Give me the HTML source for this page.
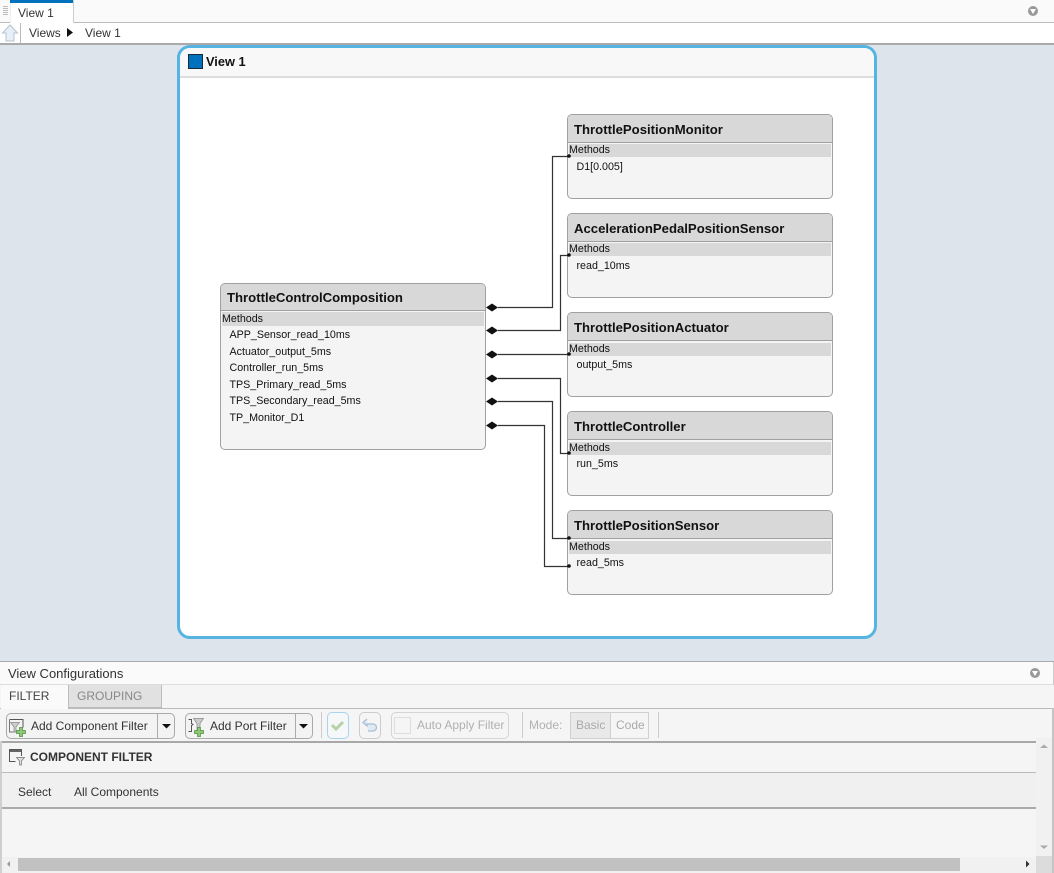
<!DOCTYPE html>
<html><head><meta charset="utf-8"><style>
html,body{margin:0;padding:0;width:1054px;height:873px;overflow:hidden;background:#dde4ec;font-family:"Liberation Sans",Arial,sans-serif;color:#222}
.a{position:absolute;box-sizing:border-box}
.t{position:absolute;white-space:nowrap;font-size:12px;line-height:14px}
.blk{position:absolute;box-sizing:border-box;width:266px;background:#f4f4f4;border:1px solid #a0a0a0;border-radius:5px;overflow:hidden}
.blk .h{position:absolute;left:0;top:0;right:0;height:27px;background:#d8d8d8;border-bottom:1px solid #a0a0a0;font-weight:bold;font-size:13.15px;line-height:29px;padding-left:6px;color:#111;box-sizing:content-box}
.blk .m{position:absolute;left:1px;top:29px;right:1px;height:13px;background:#d8d8d8;font-size:10.7px;line-height:13px;color:#111}
.blk .m2{top:30px}
.blk .r{position:absolute;left:8.500px;font-size:10.7px;line-height:14px;color:#111;white-space:nowrap}
svg{position:absolute;left:0;top:0}
</style></head><body>
<div class="a" style="left:0;top:0;width:1054px;height:23px;background:#fafafa;border-bottom:1px solid #bcbcbc"></div>
<div class="a" style="left:10px;top:0;width:64px;height:23px;background:#fff;border-right:1px solid #ccc;border-left:1px solid #eee"></div>
<div class="a" style="left:10px;top:0;width:63px;height:3px;background:#0072bd"></div>
<div class="t" style="left:18px;top:6px;color:#333">View 1</div>
<div class="a" style="left:0;top:23px;width:1054px;height:22px;background:#fff;border-bottom:2px solid #aaa"></div>
<div class="a" style="left:20px;top:23px;width:1px;height:20px;background:#bbb"></div>
<div class="t" style="left:29px;top:26px;color:#333">Views</div>
<div class="t" style="left:85px;top:26px;color:#333">View 1</div>

<div class="a" style="left:177px;top:45px;width:700px;height:594px;background:#fff;border:3px solid #56b4e2;border-radius:13px;overflow:hidden">
<div class="a" style="left:0;top:0;width:694px;height:30px;background:#f8f8f8;border-bottom:2px solid #ddd"></div>
</div>
<div class="a" style="left:188px;top:54px;width:15px;height:15px;background:#0072bd;border:1px solid #1b2a3a"></div>
<div class="t" style="left:206px;top:55px;font-weight:bold;font-size:12.8px;color:#111">View 1</div>

<div class="blk" style="left:220px;top:283px;height:167px">
<div class="h" style="height:26px;line-height:27px">ThrottleControlComposition</div>
<div class="m" style="top:28px;height:14px;line-height:14px">Methods</div>
<div class="r" style="top:44px">APP_Sensor_read_10ms</div>
<div class="r" style="top:61px">Actuator_output_5ms</div>
<div class="r" style="top:77px">Controller_run_5ms</div>
<div class="r" style="top:94px">TPS_Primary_read_5ms</div>
<div class="r" style="top:110px">TPS_Secondary_read_5ms</div>
<div class="r" style="top:127px">TP_Monitor_D1</div>
</div>

<div class="blk" style="left:567px;top:114px;height:85px"><div class="h">ThrottlePositionMonitor</div><div class="m">Methods</div><div class="r" style="top:45px">D1[0.005]</div></div>
<div class="blk" style="left:567px;top:213px;height:85px"><div class="h">AccelerationPedalPositionSensor</div><div class="m">Methods</div><div class="r" style="top:45px">read_10ms</div></div>
<div class="blk" style="left:567px;top:312px;height:85px"><div class="h">ThrottlePositionActuator</div><div class="m m2">Methods</div><div class="r" style="top:45px">output_5ms</div></div>
<div class="blk" style="left:567px;top:411px;height:85px"><div class="h">ThrottleController</div><div class="m m2">Methods</div><div class="r" style="top:45px">run_5ms</div></div>
<div class="blk" style="left:567px;top:510px;height:85px"><div class="h">ThrottlePositionSensor</div><div class="m m2">Methods</div><div class="r" style="top:45px">read_5ms</div></div>

<div class="a" style="left:0;top:661px;width:1054px;height:212px;background:#f5f5f5;border-top:1px solid #aaa"></div>
<div class="a" style="left:0;top:662px;width:1054px;height:23px;background:#fafafa;border-bottom:1px solid #ddd;border-right:1px solid #ccc"></div>
<div class="t" style="left:8px;top:667px;color:#333;font-size:13px">View Configurations</div>
<div class="a" style="left:0;top:708px;width:1054px;height:1px;background:#bbb"></div>
<div class="a" style="left:1px;top:685px;width:67px;height:24px;background:#fafafa"></div>
<div class="a" style="left:68px;top:685px;width:94px;height:23px;background:#e1e1e1;border:1px solid #bbb;border-top:0"></div>
<div class="t" style="left:9px;top:689px;color:#444">FILTER</div>
<div class="t" style="left:77px;top:689px;color:#888">GROUPING</div>

<div class="a" style="left:6px;top:713px;width:169px;height:26px;border:1px solid #aaa;border-radius:5px;background:#f3f3f3"></div>
<div class="a" style="left:157px;top:713px;width:1px;height:26px;background:#aaa"></div>
<div class="t" style="left:31px;top:719px;color:#333">Add Component Filter</div>
<div class="a" style="left:185px;top:713px;width:128px;height:26px;border:1px solid #aaa;border-radius:5px;background:#f3f3f3"></div>
<div class="a" style="left:295px;top:713px;width:1px;height:26px;background:#aaa"></div>
<div class="t" style="left:210px;top:719px;color:#333">Add Port Filter</div>
<div class="a" style="left:321px;top:712px;width:1px;height:26px;background:#ccc"></div>
<div class="a" style="left:327px;top:712px;width:22px;height:27px;border:1px solid #a8d4f0;border-radius:5px;background:#f5f7f8"></div>
<div class="a" style="left:359px;top:712px;width:22px;height:27px;border:1px solid #ccc;border-radius:5px"></div>
<div class="a" style="left:391px;top:712px;width:118px;height:27px;border:1px solid #d4d4d4;border-radius:5px"></div>
<div class="a" style="left:394px;top:717px;width:17px;height:17px;border:1px solid #ddd"></div>
<div class="t" style="left:417px;top:718px;color:#b0b0b0">Auto Apply Filter</div>
<div class="a" style="left:522px;top:712px;width:1px;height:26px;background:#ccc"></div>
<div class="t" style="left:529px;top:718px;color:#b0b0b0">Mode:</div>
<div class="a" style="left:570px;top:712px;width:41px;height:27px;background:#e9e9e9;border:1px solid #d0d0d0"></div>
<div class="a" style="left:610px;top:712px;width:39px;height:27px;border:1px solid #d0d0d0"></div>
<div class="t" style="left:576px;top:718px;color:#aaa">Basic</div>
<div class="t" style="left:616px;top:718px;color:#aaa">Code</div>
<div class="a" style="left:658px;top:712px;width:1px;height:26px;background:#ccc"></div>

<div class="a" style="left:0;top:741px;width:2px;height:132px;background:#cfcfcf"></div>
<div class="a" style="left:1052px;top:708px;width:2px;height:165px;background:#c4c4c4"></div>
<div class="a" style="left:2px;top:741px;width:1034px;height:2px;background:#a8a8a8"></div>
<div class="t" style="left:30px;top:750px;font-weight:bold;color:#333">COMPONENT FILTER</div>
<div class="a" style="left:2px;top:772px;width:1034px;height:37px;background:#f0f0f0;border-top:1px solid #bbb;border-bottom:2px solid #aaa"></div>
<div class="t" style="left:18px;top:785px;color:#333">Select</div>
<div class="t" style="left:74px;top:785px;color:#333">All Components</div>
<div class="a" style="left:1036px;top:738px;width:16px;height:119px;background:#f1f1f1"></div>
<div class="a" style="left:2px;top:857px;width:1034px;height:16px;background:#f1f1f1"></div>
<div class="a" style="left:18px;top:858px;width:942px;height:13px;background:#c1c1c1"></div>
<div class="a" style="left:1036px;top:856px;width:16px;height:17px;background:#dcdcdc"></div>

<svg width="1054" height="873" viewBox="0 0 1054 873">
<g fill="#bbb"><rect x="3" y="6" width="5" height="1"/><rect x="3" y="8" width="5" height="1"/><rect x="3" y="10" width="5" height="1"/><rect x="3" y="12" width="5" height="1"/><rect x="3" y="14" width="5" height="1"/></g>
<circle cx="1033" cy="11" r="5" fill="#999"/><path d="M1030 9h6l-3 5z" fill="#fff"/>
<circle cx="1035" cy="673" r="5" fill="#999"/><path d="M1032 671h6l-3 5z" fill="#fff"/>
<path d="M10 25l7.500 8h-3.500v8h-8v-8h-3.500z" fill="#e6eff8" stroke="#b5c3d0"/>
<path d="M67 28l6 4.500-6 4.500z" fill="#111"/>
<g fill="none" stroke="#333" stroke-width="1.200">
<path d="M498 307.500H552.500V156.500H569"/>
<path d="M498 330.500H560.500V255.500H569"/>
<path d="M498 354.500H569"/>
<path d="M498 378.500H560.500V453.500H569"/>
<path d="M498 401.500H552.500V538.500H569"/>
<path d="M498 425.500H544.500V566.500H569"/>
</g>
<g fill="#111">
<path d="M486 307.500l6-4 6 4-6 4z"/><path d="M486 330.500l6-4 6 4-6 4z"/><path d="M486 354.500l6-4 6 4-6 4z"/><path d="M486 378.500l6-4 6 4-6 4z"/><path d="M486 401.500l6-4 6 4-6 4z"/><path d="M486 425.500l6-4 6 4-6 4z"/>
<circle cx="569" cy="156" r="1.800"/><circle cx="569" cy="255" r="1.800"/><circle cx="569" cy="354" r="1.800"/><circle cx="569" cy="453" r="1.800"/><circle cx="569" cy="538" r="1.800"/><circle cx="569" cy="566" r="1.800"/>
</g>
<g>
<path d="M9.500 719.500h13.500v8" fill="none" stroke="#555"/><path d="M9.500 719.500v12.500h6" fill="none" stroke="#777"/>
<path d="M10.500 722.500h9l-3.500 4.500v5h-2v-5z" fill="#ccc" stroke="#888" stroke-width=".7"/>
<path d="M19.500 727.500h3v-0h0v3h3v3h-3v3h-3v-3h-3v-3h3z" fill="#8cc878" stroke="#4d8c3c" stroke-width=".7"/>
<path d="M188.500 719.500h3v4l1.500 1-1.500 1v6h-3" fill="none" stroke="#555"/>
<path d="M193.500 718.500h10l-3.500 5v6h-3v-6z" fill="#ccc" stroke="#888" stroke-width=".7"/>
<path d="M197.500 727.500h3v3h3v3h-3v3h-3v-3h-3v-3h3z" fill="#8cc878" stroke="#4d8c3c" stroke-width=".7"/>
<path d="M162 724h9l-4.500 4.500z" fill="#111"/><path d="M299 724h9l-4.500 4.500z" fill="#111"/>
<path d="M332 725l4 4 7-7" fill="none" stroke="#b5d2a8" stroke-width="3"/>
<path d="M367 719l-4 3.500 4 3.500v-2h6a3 3 0 0 1 0 7h-5" fill="#dfeaf4" stroke="#a9bfd4" stroke-width="1.300"/>
<path d="M21.500 756v-6.500h-12v12h6" fill="none" stroke="#555"/><rect x="10" y="750" width="11" height="2" fill="#666"/>
<path d="M16.500 757.500h8l-3 3.500v4h-2v-4z" fill="#ddd" stroke="#777" stroke-width=".7"/>
<path d="M1040 748l4-3.500 4 3.500z" fill="#aaa"/><path d="M1040 845.500l4 3.500 4-3.500z" fill="#aaa"/>
<path d="M10 861v6l-3-3z" fill="#999"/><path d="M1026 860.500v7l3.500-3.500z" fill="#333"/>
</g>
</svg>
</body></html>
